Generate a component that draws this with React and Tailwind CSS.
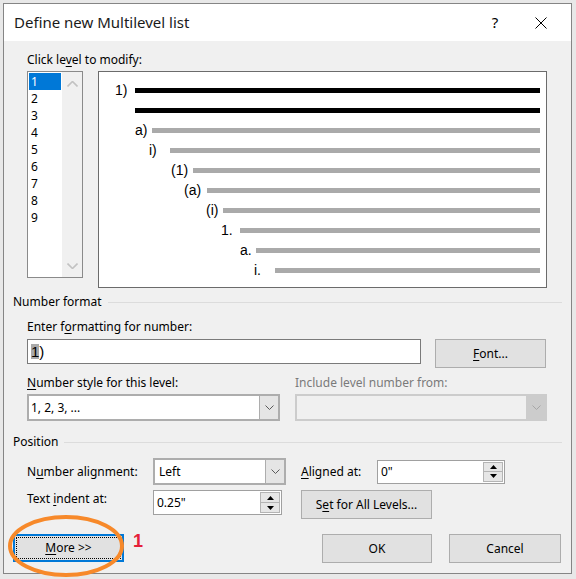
import React from 'react';

const ui = "font-['Segoe_UI','Noto_Sans',sans-serif]";
const arial = "font-['Liberation_Sans',Arial,sans-serif]";

const previewRows = [
    { label: '1)', box: 'w-[36px] pl-[16px]', line: 'bg-black' },
    { label: '', box: 'w-[36px] pl-[16px]', line: 'bg-black' },
    { label: 'a)', box: 'w-[53px] pl-[36px]', line: 'bg-[#aaaaaa]' },
    { label: 'i)', box: 'w-[71px] pl-[50px]', line: 'bg-[#aaaaaa]' },
    { label: '(1)', box: 'w-[94px] pl-[72px]', line: 'bg-[#aaaaaa]' },
    { label: '(a)', box: 'w-[108px] pl-[85px]', line: 'bg-[#aaaaaa]' },
    { label: '(i)', box: 'w-[124px] pl-[107px]', line: 'bg-[#aaaaaa]' },
    { label: '1.', box: 'w-[141px] pl-[122px]', line: 'bg-[#aaaaaa]' },
    { label: 'a.', box: 'w-[157px] pl-[141px]', line: 'bg-[#aaaaaa]' },
    { label: 'i.', box: 'w-[176px] pl-[155px]', line: 'bg-[#aaaaaa]' },
];

const levels = ['1', '2', '3', '4', '5', '6', '7', '8', '9'];

const Chevron = ({ color = '#5a5a5a' }) => (
    <svg width="9" height="5" viewBox="0 0 9 5">
        <polyline points="0.5,0.5 4.5,4.5 8.5,0.5" fill="none" stroke={color} strokeWidth="1" />
    </svg>
);

const ChevronUp = ({ color = '#c2c2c2' }) => (
    <svg width="11" height="6" viewBox="0 0 11 6">
        <polyline points="0.5,5.5 5.5,0.5 10.5,5.5" fill="none" stroke={color} strokeWidth="1.6" />
    </svg>
);

const ChevronDown = ({ color = '#c2c2c2' }) => (
    <svg width="11" height="6" viewBox="0 0 11 6">
        <polyline points="0.5,0.5 5.5,5.5 10.5,0.5" fill="none" stroke={color} strokeWidth="1.6" />
    </svg>
);

const Heading = ({ children }) => (
    <div className="flex items-center h-[16px]">
        <span className="text-[12px] leading-[16px] text-black">{children}</span>
        <div className="flex-1 h-px bg-[#dcdcdc] ml-[6px]" />
    </div>
);

const Combo = ({ value, width, disabled }) => (
    <div className={`${width} h-[27px] flex border-2 ${disabled ? 'border-[#cccccc] bg-[#f0f0f0]' : 'border-[#adadad] bg-white'}`}>
        <div className="flex-1 flex items-center pl-[2px] text-[12px] text-black">{value}</div>
        <div className={`w-[19px] flex items-center justify-center border-l ${disabled ? 'bg-[#cccccc] border-[#cccccc]' : 'bg-[#e5e5e5] border-[#adadad]'}`}>
            <Chevron color={disabled ? '#a6a6a6' : '#5a5a5a'} />
        </div>
    </div>
);

const Spin = ({ value, width, height }) => (
    <div className={`${width} ${height} flex bg-white border border-[#a0a0a0] p-[1px]`}>
        <div className="flex-1 flex items-center pl-[2px] text-[12px] text-black">{value}</div>
        <div className="w-[20px] flex flex-col">
            <div className="flex-1 flex items-center justify-center bg-[#e6e6e6] border border-[#b4b4b4]">
                <svg width="7" height="4" viewBox="0 0 7 4"><polygon points="0,4 3.5,0 7,4" fill="#000" /></svg>
            </div>
            <div className="flex-1 flex items-center justify-center bg-[#e6e6e6] border border-t-0 border-[#b4b4b4]">
                <svg width="7" height="4" viewBox="0 0 7 4"><polygon points="0,0 3.5,4 7,0" fill="#000" /></svg>
            </div>
        </div>
    </div>
);

const Button = ({ children, width }) => (
    <div className={`${width} h-[29px] flex items-center justify-center bg-[#e1e1e1] border border-[#adadad] text-[12px] text-black`}>
        {children}
    </div>
);

export default function App() {
    return (
        <div className={`relative w-[576px] h-[579px] bg-[#e8e8e8] pt-[3px] pl-[3px] ${ui}`}>
            <div className="w-[569px] h-[571px] flex flex-col bg-[#f0f0f0] border border-[#858585]">
                {/* title bar */}
                <div className="h-[37px] flex items-center bg-white pl-[10px] pr-[7px]">
                    <span className="flex-1 text-[15px] text-[#1a1a1a]">Define new Multilevel list</span>
                    <div className="w-[46px] flex justify-center text-[15px] text-black">?</div>
                    <div className="w-[46px] flex justify-center">
                        <svg width="12" height="12" viewBox="0 0 12 12">
                            <line x1="0.5" y1="0.5" x2="11.5" y2="11.5" stroke="#000" strokeWidth="1" />
                            <line x1="11.5" y1="0.5" x2="0.5" y2="11.5" stroke="#000" strokeWidth="1" />
                        </svg>
                    </div>
                </div>

                <div className="flex-1 flex flex-col pl-[9px] pr-[9px] text-[12px] text-black">
                    <div className="ml-[14px] mt-[11px] h-[16px] leading-[16px]">
                        Click le<u className="underline-offset-2">v</u>el to modify:
                    </div>

                    <div className="ml-[14px] mt-[3px] flex items-start">
                        {/* level list */}
                        <div className="w-[56px] h-[207px] flex border border-[#8a8a8a] bg-white">
                            <div className="w-[34px] p-[1px] flex flex-col">
                                {levels.map((lv, i) => (
                                    <div
                                        key={lv}
                                        className={`h-[17px] leading-[17px] pl-[2px] ${i === 0 ? 'bg-[#0078d7] text-white' : 'text-black'}`}
                                    >
                                        {lv}
                                    </div>
                                ))}
                            </div>
                            <div className="flex-1 flex flex-col justify-between items-center bg-[#f0f0f0] pt-[9px] pb-[8px]">
                                <ChevronUp />
                                <ChevronDown />
                            </div>
                        </div>

                        {/* preview */}
                        <div className={`ml-[15px] w-[449px] h-[217px] bg-white border border-[#6b6b6b] pt-[8px] pr-[6px] ${arial}`}>
                            {previewRows.map((row, i) => (
                                <div key={i} className="h-[20px] flex items-center">
                                    <div className={`${row.box} shrink-0 text-[14px] leading-[20px] text-black`}>{row.label}</div>
                                    <div className={`flex-1 h-[5px] ${row.line}`} />
                                </div>
                            ))}
                        </div>
                    </div>

                    {/* number format */}
                    <div className="mt-[6px]">
                        <Heading>Number format</Heading>
                    </div>
                    <div className="ml-[14px] mt-[9px] h-[16px] leading-[16px]">
                        Enter f<u className="underline-offset-2">o</u>rmatting for number:
                    </div>
                    <div className="ml-[14px] mt-[4px] flex items-start">
                        <div className={`w-[394px] h-[25px] flex items-center bg-white border border-[#7a7a7a] pl-[3px] text-[15px] ${arial}`}>
                            <span className="bg-[#a9a9a9] leading-[15px]">1</span>
                            <span className="leading-[15px]">)</span>
                        </div>
                        <div className="ml-[14px]">
                            <Button width="w-[111px]">
                                <span><u className="underline-offset-2">F</u>ont...</span>
                            </Button>
                        </div>
                    </div>
                    <div className="ml-[14px] mt-[7px] h-[16px] leading-[16px] flex">
                        <div className="w-[268px]"><u className="underline-offset-2">N</u>umber style for this level:</div>
                        <div className="text-[#7a7a7a]">Include level number from:</div>
                    </div>
                    <div className="ml-[14px] mt-[3px] flex">
                        <Combo value="1, 2, 3, ..." width="w-[253px]" />
                        <div className="ml-[15px]">
                            <Combo value="" width="w-[252px]" disabled />
                        </div>
                    </div>

                    {/* position */}
                    <div className="mt-[13px]">
                        <Heading>Position</Heading>
                    </div>
                    <div className="ml-[14px] mt-[8px] h-[27px] flex items-center">
                        <div className="w-[126px]">N<u className="underline-offset-2">u</u>mber alignment:</div>
                        <Combo value={<span className="pl-[2px]">Left</span>} width="w-[133px]" />
                        <div className="ml-[15px] w-[76px]"><u className="underline-offset-2">A</u>ligned at:</div>
                        <Spin value={'0"'} width="w-[128px]" height="h-[24px]" />
                    </div>
                    <div className="ml-[14px] mt-[5px] flex items-start">
                        <div className="w-[126px] mt-[1px] leading-[16px]">Text <u className="underline-offset-2">i</u>ndent at:</div>
                        <Spin value={'0.25"'} width="w-[129px]" height="h-[25px]" />
                        <div className="ml-[19px]">
                            <Button width="w-[131px]">
                                <span>S<u className="underline-offset-2">e</u>t for All Levels...</span>
                            </Button>
                        </div>
                    </div>

                    {/* bottom buttons */}
                    <div className="mt-[15px] flex items-start pr-[1px]">
                        <div className="w-[111px] h-[28px] border-2 border-[#0078d7] bg-[#e1e1e1] p-[1px]">
                            <div className="w-full h-full flex items-center justify-center border border-dotted border-black">
                                <span><u className="underline-offset-2">M</u>ore &gt;&gt;</span>
                            </div>
                        </div>
                        <div className={`ml-[9px] -mt-[2px] text-[18px] leading-none font-bold text-[#e5203a] ${arial}`}>1</div>
                        <div className="flex-1" />
                        <Button width="w-[110px]">OK</Button>
                        <div className="ml-[17px]">
                            <Button width="w-[112px]">Cancel</Button>
                        </div>
                    </div>
                </div>
            </div>

            {/* annotation ring around More button */}
            <svg className="absolute left-[8px] top-[515px]" width="116" height="62" viewBox="0 0 116 62">
                <ellipse cx="58" cy="31" rx="56" ry="29" fill="none" stroke="#f7892a" strokeWidth="4" />
            </svg>
        </div>
    );
}
